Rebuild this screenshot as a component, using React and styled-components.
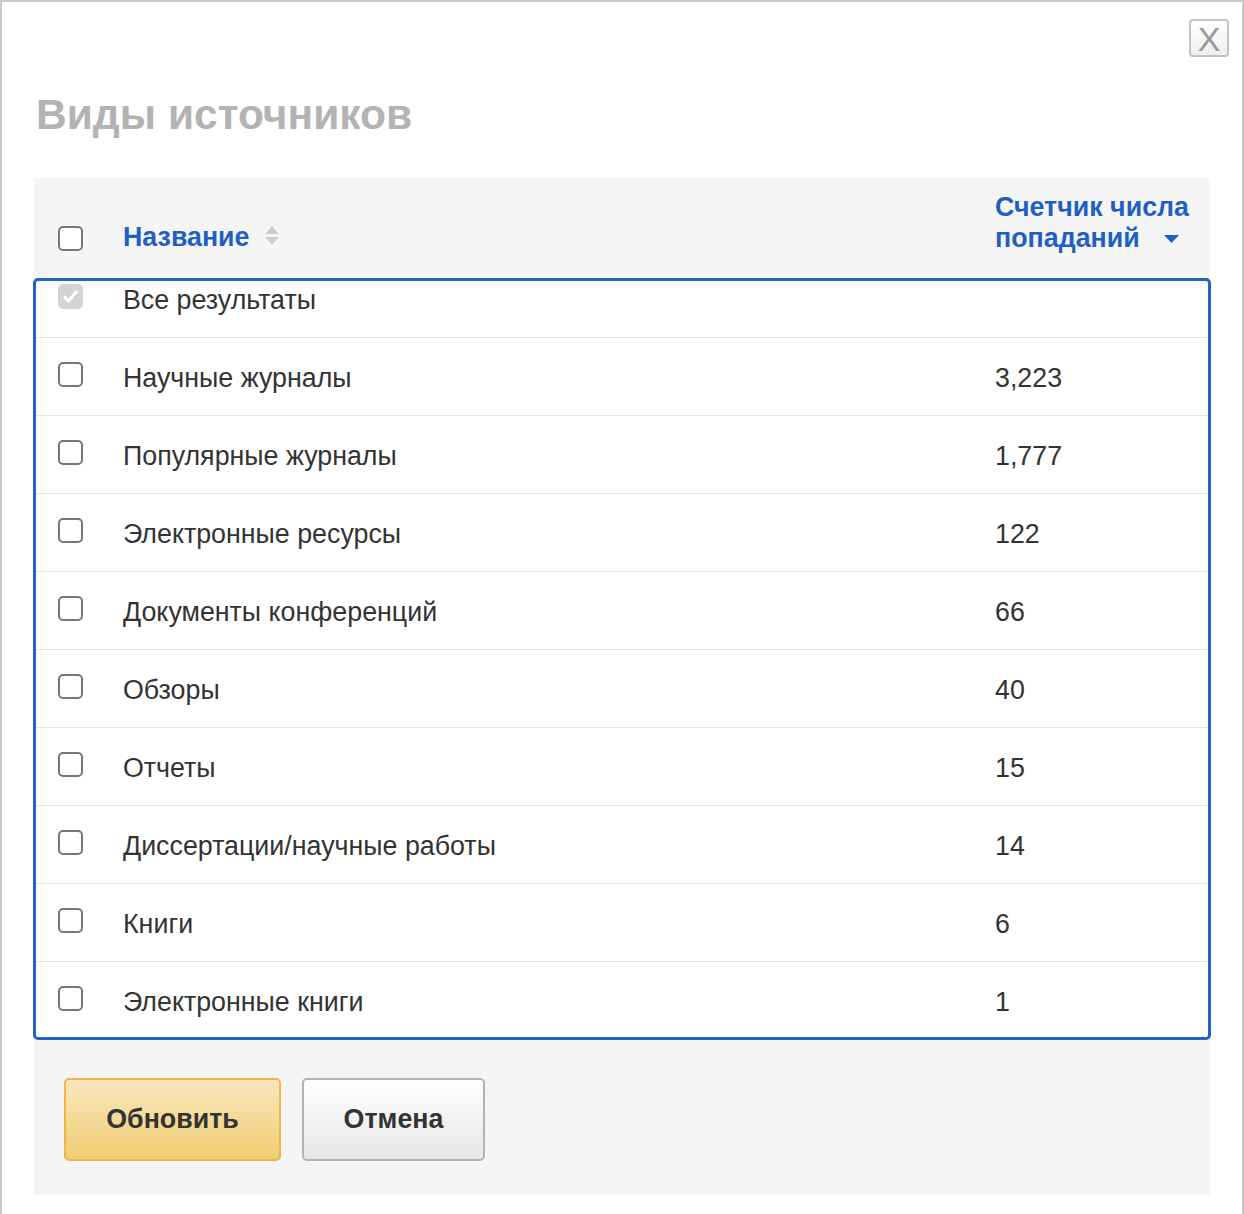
import styled, { createGlobalStyle } from 'styled-components'

const GlobalStyle = createGlobalStyle`
  body {
    margin: 0;
    font-family: "Liberation Sans", Arial, sans-serif;
    background: #ffffff;
  }
`

const sources = [
  { name: 'Все результаты', count: '', all: true },
  { name: 'Научные журналы', count: '3,223' },
  { name: 'Популярные журналы', count: '1,777' },
  { name: 'Электронные ресурсы', count: '122' },
  { name: 'Документы конференций', count: '66' },
  { name: 'Обзоры', count: '40' },
  { name: 'Отчеты', count: '15' },
  { name: 'Диссертации/научные работы', count: '14' },
  { name: 'Книги', count: '6' },
  { name: 'Электронные книги', count: '1' },
]

const SortIcon = () => (
  <svg width="16" height="22" viewBox="0 0 16 22">
    <path d="M1 9 L8 1 L15 9 Z" fill="#cfcfcf" />
    <path d="M1 12 L8 20 L15 12 Z" fill="#cfcfcf" />
  </svg>
)

const Caret = () => (
  <svg width="15" height="8" viewBox="0 0 15 8">
    <path d="M0 0 L15 0 L7.5 8 Z" fill="#1f5fc4" />
  </svg>
)

const App = () => {
  return (
    <>
      <GlobalStyle />
      <Dialog>
        <TopBar>
          <CloseButton>X</CloseButton>
        </TopBar>
        <Title>Виды источников</Title>
        <Panel>
          <HeadRow>
            <Checkbox />
            <HeadLabel>
              Название
              <SortWrap>
                <SortIcon />
              </SortWrap>
            </HeadLabel>
            <HeadLabel>
              Счетчик числа
              <br />
              попаданий
              <CaretWrap>
                <Caret />
              </CaretWrap>
            </HeadLabel>
          </HeadRow>
          <ListFrame>
            <List>
              {sources.map((item) => (
                <Row key={item.name}>
                  {item.all ? (
                    <CheckedBox>
                      <svg width="17" height="14" viewBox="0 0 17 14">
                        <path
                          d="M2 7.5 L6.5 12 L15 2"
                          stroke="#ffffff"
                          strokeWidth="3"
                          fill="none"
                        />
                      </svg>
                    </CheckedBox>
                  ) : (
                    <RowCheckbox />
                  )}
                  <Cell>{item.name}</Cell>
                  <Cell>{item.count}</Cell>
                </Row>
              ))}
            </List>
          </ListFrame>
          <Footer>
            <PrimaryButton>Обновить</PrimaryButton>
            <SecondaryButton>Отмена</SecondaryButton>
          </Footer>
        </Panel>
      </Dialog>
    </>
  )
}

const Dialog = styled.div`
  box-sizing: border-box;
  width: 1244px;
  min-height: 1214px;
  border: 2px solid #c9c9c9;
  border-bottom: none;
  padding: 17px 0 0 0;
  background: #ffffff;
`

const TopBar = styled.div`
  display: flex;
  justify-content: flex-end;
  padding-right: 13px;
`

const CloseButton = styled.div`
  box-sizing: border-box;
  width: 40px;
  height: 38px;
  border: 2px solid #c4c4c4;
  border-radius: 4px;
  background: linear-gradient(#ffffff, #eeeeee);
  color: #9a9a9a;
  font-size: 34px;
  line-height: 36px;
  text-align: center;
  font-family: "Liberation Sans", Arial, sans-serif;
`

const Title = styled.h1`
  margin: 35px 0 40px 34px;
  font-size: 42.5px;
  line-height: 46px;
  font-weight: bold;
  color: #b3b3b3;
`

const Panel = styled.div`
  margin: 0 32px;
  background: #f5f5f5;
`

const HeadRow = styled.div`
  display: grid;
  grid-template-columns: 89px 872px 1fr;
  align-items: end;
  height: 100px;
  box-sizing: border-box;
  padding-bottom: 26px;
  padding-left: 24px;
`

const Checkbox = styled.span`
  display: block;
  box-sizing: border-box;
  width: 25px;
  height: 25px;
  border: 2px solid #777777;
  border-radius: 5px;
  background: #ffffff;
  margin-bottom: 1px;
`

const HeadLabel = styled.div`
  color: #1f5fc4;
  font-weight: bold;
  font-size: 26.8px;
  line-height: 27px;
  margin-left: -24px;
  white-space: nowrap;
`

const SortWrap = styled.span`
  display: inline-block;
  margin-left: 14px;
  vertical-align: -1px;
`

const CaretWrap = styled.span`
  display: inline-block;
  margin-left: 24px;
  vertical-align: 4px;
`

const ListFrame = styled.div`
  margin: 0 -1px;
  height: 756px;
  overflow: hidden;
  border: 3px solid #2362c6;
  border-radius: 5px;
  background: #ffffff;
`

const List = styled.div`
  margin-top: -21px;
`

const Row = styled.div`
  display: grid;
  grid-template-columns: 87px 872px 1fr;
  align-items: center;
  height: 78px;
  box-sizing: border-box;
  border-bottom: 1px solid #e6e6e6;
  padding-left: 22px;
`

const RowCheckbox = styled(Checkbox)`
  margin: -5px 0 0 0;
`

const CheckedBox = styled.span`
  display: flex;
  align-items: center;
  justify-content: center;
  width: 25px;
  height: 25px;
  border-radius: 5px;
  background: #d3d3d3;
  margin-top: -5px;
`

const Cell = styled.div`
  font-size: 26.8px;
  color: #333333;
  margin: 3px 0 0 -22px;
  white-space: nowrap;
`

const Footer = styled.div`
  display: flex;
  gap: 21px;
  padding: 38px 30px 34px;
`

const Button = styled.button`
  box-sizing: border-box;
  height: 83px;
  border-radius: 5px;
  font-family: "Liberation Sans", Arial, sans-serif;
  font-weight: bold;
  font-size: 26.8px;
  color: #333333;
  cursor: pointer;
`

const PrimaryButton = styled(Button)`
  width: 217px;
  border: 2px solid #f1b446;
  background: linear-gradient(#f8e7bd, #f0cd72);
`

const SecondaryButton = styled(Button)`
  width: 183px;
  border: 2px solid #b3b3b3;
  background: linear-gradient(#ffffff, #e6e6e6);
`

export default App
